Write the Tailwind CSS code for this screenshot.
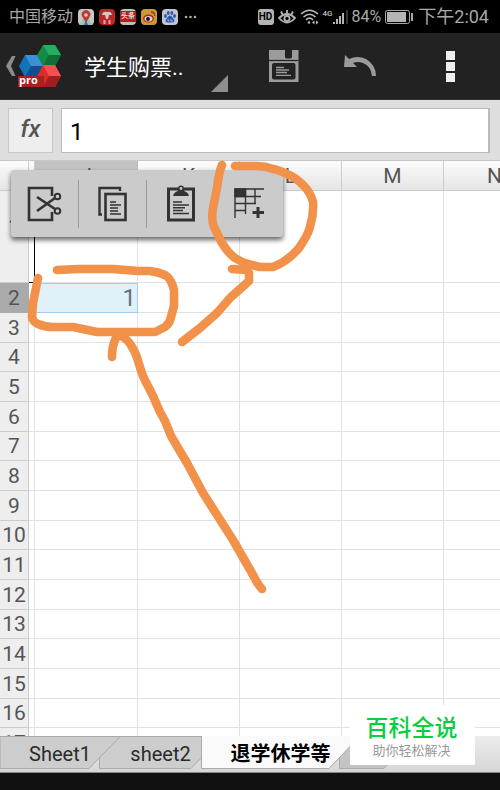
<!DOCTYPE html>
<html lang="zh-CN">
<head>
  <meta charset="UTF-8" />
  <meta name="viewport" content="width=device-width, initial-scale=1.0" />
  <title>学生购票</title>
  <script src="https://cdn.jsdelivr.net/npm/@tailwindcss/browser@4"></script>
  <style>
    body { font-family: Roboto, 'Noto Sans CJK SC', sans-serif; }
  </style>
</head>
<body class="relative flex flex-col h-screen overflow-hidden bg-white">

  <!-- Status bar -->
  <div class="flex items-center justify-between h-[33px] shrink-0 bg-black text-[#a8a8a8] pl-[9px] pr-[11px]">
    <div class="flex items-center gap-[5px]">
      <span class="text-base">中国移动</span>
      <svg class="w-4 h-4" viewBox="0 0 16 16">
        <rect width="16" height="16" rx="4" fill="#c4c8ca"/>
        <path d="M1 16 L6 9 L10 9 L15 16 Z" fill="#9fc3b0"/>
        <path d="M8 14 L4.500 8 A4.300 4.300 0 1 1 11.500 8 Z" fill="#c03a30"/>
        <circle cx="8" cy="6" r="1.800" fill="#e0c8c4"/>
        <path d="M6 16 L8 11 L10 16 Z" fill="#2f6fc0"/>
      </svg>
      <svg class="w-4 h-4" viewBox="0 0 16 16">
        <rect width="16" height="16" rx="4" fill="#bd2626"/>
        <path d="M3 6 Q4 2 8 3 Q12 2 13 6 L10 6 L9 10 L7 10 L6 6 Z" fill="#d8c4c0"/>
        <path d="M4 12 H7 M4 14 H7 M9 12 H12 M9 14 H12 M5.500 11 V15 M10.500 11 V15" stroke="#e0a8a0"/>
      </svg>
      <span class="flex items-center justify-center w-4 h-4 rounded bg-[#c4bcbc]"><span class="w-full bg-[#b81c1c] text-[#ddd] text-[7px] leading-[11px] font-bold text-center whitespace-nowrap">头条</span></span>
      <svg class="w-4 h-4" viewBox="0 0 16 16">
        <rect width="16" height="16" rx="4" fill="#c99b35"/>
        <ellipse cx="7.500" cy="9.500" rx="5.500" ry="4" fill="#b8231c"/>
        <ellipse cx="7.500" cy="9.800" rx="4" ry="2.800" fill="#d8d4d0"/>
        <circle cx="7" cy="10" r="1.900" fill="#111"/>
        <path d="M10 3 Q14 3 13.500 7" fill="none" stroke="#b8231c" stroke-width="1.300"/>
      </svg>
      <svg class="w-4 h-4" viewBox="0 0 16 16">
        <rect width="16" height="16" rx="4" fill="#c2c6cc"/>
        <g fill="#2a57b8">
          <ellipse cx="3.500" cy="7" rx="1.400" ry="2"/><ellipse cx="6.200" cy="4" rx="1.400" ry="2"/>
          <ellipse cx="9.800" cy="4" rx="1.400" ry="2"/><ellipse cx="12.500" cy="7" rx="1.400" ry="2"/>
          <path d="M8 6.500 C10 6.500 10.500 9 12 10.500 C13.500 12.500 11.500 14 8 13.500 C4.500 14 2.500 12.500 4 10.500 C5.500 9 6 6.500 8 6.500 Z"/>
        </g>
        <path d="M6 10 V12 H7.500 M9 10 V12 H11" fill="none" stroke="#c2c6cc" stroke-width=".8"/>
      </svg>
      <svg class="w-4 h-4" viewBox="0 0 16 16" fill="#a8a8a8"><circle cx="3" cy="8" r="1.300"/><circle cx="7.500" cy="8" r="1.300"/><circle cx="12" cy="8" r="1.300"/></svg>
    </div>
    <div class="flex items-center gap-1">
      <span class="w-4 h-4 rounded-[3px] bg-[#b4b4b4] text-black text-[10px] leading-4 font-bold text-center">HD</span>
      <svg class="w-[18px] h-4" viewBox="0 0 18 16" fill="none" stroke="#b4b4b4" stroke-width="1.800">
        <path d="M1 9 Q9 1 17 9 Q9 18 1 9 Z"/><circle cx="9" cy="9.500" r="2.600"/>
        <path d="M9 1 V4 M3 2.500 L4.500 5.500 M15 2.500 L13.500 5.500"/>
      </svg>
      <svg class="w-[19px] h-4" viewBox="0 0 19 16" fill="none" stroke="#b4b4b4" stroke-width="1.600">
        <path d="M1 5 Q9.500 -2.500 18 5 M3.500 8 Q9.500 2.500 15.500 8 M6 10.800 Q9.500 7.500 13 10.800"/>
        <circle cx="9" cy="13.500" r="1.300" fill="#b4b4b4" stroke="none"/>
        <path d="M12 13.500 L14.500 11.500 V15.500 Z M18.500 13.500 L16 11.500 V15.500 Z" fill="#b4b4b4" stroke="none"/>
      </svg>
      <span class="flex items-start">
        <span class="text-[8px] leading-[9px] font-bold">4G</span>
        <svg class="w-[15px] h-4" viewBox="0 0 15 16" fill="#b4b4b4">
          <rect x="0" y="13" width="2" height="2"/><rect x="3" y="10" width="2" height="5"/><rect x="6" y="7" width="2" height="8"/><rect x="9" y="4" width="2" height="11"/><rect x="13" y="1" width="2" height="14" fill="#333"/>
        </svg>
      </span>
      <span class="text-base">84%</span>
      <svg class="w-[28px] h-[14px]" viewBox="0 0 28 14">
        <rect x=".5" y=".5" width="24" height="13" rx="2" fill="none" stroke="#a8a8a8"/>
        <rect x="2" y="2" width="19" height="10" fill="#b4b4b4"/><rect x="26" y="3" width="2" height="8" fill="#a8a8a8"/>
      </svg>
      <span class="text-lg ml-px whitespace-nowrap">下午2:04</span>
    </div>
  </div>

  <!-- App toolbar -->
  <header class="flex items-center h-[67px] shrink-0 bg-[#222] border-b border-[#333]">
    <button class="pl-[5px] shrink-0" aria-label="返回">
      <svg class="w-[58px] h-[44px]" viewBox="0 0 58 44">
        <path d="M7 12 H10.500 L6 22 L10.500 32 H7 L1 22 Z" fill="#8d8d8d"/>
        <path d="M38 1 H50 L56 11 L50 22 H38 L32 11 Z" fill="#178a44"/>
        <path d="M38 1 H50 L56 11 H44 Z" fill="#27ad5e"/>
        <path d="M44 11 H56 L50 22 H38 Z" fill="#0f6d35"/>
        <path d="M20 11 H32 L38 22 L32 33 H20 L14 22 Z" fill="#1373ba"/>
        <path d="M20 11 H32 L38 22 H26 Z" fill="#3b92d2"/>
        <path d="M26 22 H38 L32 33 H20 Z" fill="#134d8a"/>
        <path d="M38 21 H50 L56 32 L50 43 H38 L32 32 Z" fill="#d92d2d"/>
        <path d="M38 21 H50 L56 32 H44 Z" fill="#f05252"/>
        <path d="M44 32 H56 L50 43 H38 Z" fill="#a21d20"/>
        <rect x="13" y="32" width="26" height="11" fill="#a8201f"/>
        <text x="14" y="40" font-family="Open Sans" font-size="11" font-weight="700" fill="#fff">pro</text>
      </svg>
    </button>
    <div class="relative ml-[21px] w-[144px] h-full">
      <select aria-label="文档" class="appearance-none w-full h-full bg-transparent text-white text-[22px] pt-[2px]">
        <option>学生购票..</option>
      </select>
      <svg class="absolute right-0 bottom-[7px] w-[17px] h-[17px] pointer-events-none" viewBox="0 0 17 17"><path d="M17 0 V17 H0 Z" fill="#8f8f8f"/></svg>
    </div>
    <div class="flex-1 flex items-center justify-between pl-[41px] pr-[45px]">
      <button aria-label="保存">
        <svg class="w-[30px] h-8" viewBox="0 0 30 32">
          <path d="M0 0 H16 V7 Q16 8.500 18 8.500 H21 Q23 8.500 23 7 V0 H29.500 V32 H0 Z" fill="#9b9b9b"/>
          <path d="M0 10.500 H29.500" stroke="#222" stroke-width="1.200"/>
          <rect x="3" y="13" width="23.500" height="16.500" rx="2" fill="#222"/>
          <path d="M7 17.500 H15 M7 20 H20 M7 22.500 H18 M7 25.300 H22" stroke="#9b9b9b" stroke-width="1.300"/>
        </svg>
      </button>
      <button class="ml-7" aria-label="撤销">
        <svg class="w-[33px] h-[22px]" viewBox="0 0 33 22">
          <path d="M1 0 L5 4 Q14 0 22 4 Q32 10 32 21 H28 Q27 11 19 8 Q14 6 9 8 L13 12 H0 Z" fill="#9b9b9b"/>
        </svg>
      </button>
      <button class="ml-[52px] flex flex-col gap-[2px]" aria-label="菜单">
        <span class="w-[9px] h-[9px] bg-[#eee]"></span>
        <span class="w-[9px] h-[9px] bg-[#eee]"></span>
        <span class="w-[9px] h-[9px] bg-[#eee]"></span>
      </button>
    </div>
  </header>

  <!-- Formula bar -->
  <div class="flex gap-2 h-[61px] shrink-0 bg-[#dedede] py-2 pl-2 pr-[10px] border-b border-[#c8c8c8]">
    <button class="w-[45px] h-[45px] shrink-0 bg-[#eee] border border-[#c8c8c8] text-[#555] text-2xl font-medium italic pb-1" aria-label="函数">fx</button>
    <input type="text" value="1" aria-label="公式" class="flex-1 min-w-0 h-[45px] bg-white border border-[#bbb] border-r-2 px-2 pt-[2px] text-2xl text-black outline-none" />
  </div>

  <!-- Sheet -->
  <main class="relative flex-1 min-h-0 overflow-hidden">
    <table class="table-fixed w-[546px] border-separate border-spacing-0 text-[21px] leading-6 text-[#555]">
      <colgroup>
        <col class="w-[29px]" /><col class="w-[6px]" />
        <col class="w-[103px]" /><col class="w-[102px]" /><col class="w-[102px]" /><col class="w-[102px]" /><col class="w-[102px]" />
      </colgroup>
      <thead>
        <tr class="h-[30px] bg-linear-to-b from-[#fcfcfc] to-[#e4e4e4]">
          <th class="p-0 border-r border-b border-[#ccc]"></th>
          <th class="p-0 border-r border-b border-[#ccc]"></th>
          <th class="p-0 font-normal border-r border-b border-[#bbb] bg-[#c3c3c3]">J</th>
          <th class="p-0 font-normal border-r border-b border-[#ccc]">K</th>
          <th class="p-0 font-normal border-r border-b border-[#ccc]">L</th>
          <th class="p-0 font-normal border-r border-b border-[#ccc]">M</th>
          <th class="p-0 font-normal border-r border-b border-[#ccc]">N</th>
        </tr>
      </thead>
      <tbody id="rows">
        <tr class="h-[92px]">
          <th class="p-0 pb-5 font-normal bg-[#eee] border-r border-b border-[#ccc]">1</th>
          <td class="p-0 border-r border-b border-black"></td>
          <td class="p-0 border-r border-b border-[#e2e2e2]"></td>
          <td class="p-0 border-r border-b border-[#e2e2e2]"></td>
          <td class="p-0 border-r border-b border-[#e2e2e2]"></td>
          <td class="p-0 border-r border-b border-[#e2e2e2]"></td>
          <td class="p-0 border-r border-b border-[#e2e2e2]"></td>
        </tr>
        <tr class="h-[30px]">
          <th class="p-0 font-normal bg-[#aaa] border-r border-b border-[#aaa]">2</th>
          <td class="p-0 border-r border-b border-[#e2e2e2]"></td>
          <td class="p-0 pr-px text-right text-2xl leading-7 text-[#66747c] bg-[#e1f1fa] border border-[#9fcdf7]">1</td>
          <td class="p-0 border-r border-b border-[#e2e2e2]"></td>
          <td class="p-0 border-r border-b border-[#e2e2e2]"></td>
          <td class="p-0 border-r border-b border-[#e2e2e2]"></td>
          <td class="p-0 border-r border-b border-[#e2e2e2]"></td>
        </tr>
      </tbody>
    </table>

    <!-- Cell popup menu -->
    <div class="absolute left-[11px] top-[9px] flex items-center h-[67px] bg-[#cbcbcb] rounded-[3px] shadow-[0_3px_5px_rgba(0,0,0,0.6)]">
      <button class="flex items-center justify-center w-[68px] h-12 border-r border-[#999]" aria-label="剪切">
        <svg class="w-[35px] h-[36px]" viewBox="0 0 35 36" fill="none" stroke="#333">
          <path d="M25 10 V2 H2 V34 H25 V26" stroke-width="2.600"/>
          <path d="M10 11 L28 23 M10 25 L28 12" stroke-width="2.600"/>
          <circle cx="30.500" cy="10.500" r="2.800" stroke-width="2"/><circle cx="30.500" cy="25" r="2.800" stroke-width="2"/>
        </svg>
      </button>
      <button class="flex items-center justify-center w-[68px] h-12 border-r border-[#999]" aria-label="复制">
        <svg class="w-[29px] h-[36px]" viewBox="0 0 29 36" fill="none" stroke="#333">
          <path d="M4 28.500 H1.500 V2 H22 V5" stroke-width="2.400"/>
          <rect x="7.500" y="8" width="20" height="26" stroke-width="2.600"/>
          <path d="M12 16 H18 M12 19 H23 M12 22 H20 M12 25 H20 M12 28 H23" stroke-width="1.300"/>
        </svg>
      </button>
      <button class="flex items-center justify-center w-[68px] h-12 border-r border-[#999]" aria-label="粘贴">
        <svg class="w-[28px] h-[37px]" viewBox="0 0 28 37" fill="none" stroke="#333">
          <rect x="1.500" y="4" width="25" height="31" stroke-width="3"/>
          <path d="M6 11 Q7 7 11 6 V4 H17 V6 Q21 7 22 11 Z" fill="#333" stroke="none"/>
          <circle cx="14" cy="3.500" r="2.200" stroke-width="1.500" fill="#cbcbcb"/>
          <path d="M6 17 H15 M6 20 H22 M6 22.700 H18 M6 25.400 H16 M6 28.500 H22" stroke-width="1.500"/>
        </svg>
      </button>
      <button class="flex items-center justify-center w-[68px] h-12" aria-label="选择区域">
        <svg class="w-[31px] h-[31px]" viewBox="0 0 31 31" fill="none" stroke="#333" stroke-width="1.400">
          <path d="M1 30 V1 H30 M1 8.500 H27 M1 15.500 H22 M1 22.500 H12 M11.500 1 V26 M21 1 V16"/>
          <rect x="1" y="1" width="10.500" height="7.500" fill="#333"/>
          <path d="M24 19 V30 M18.500 24.500 H30" stroke-width="3"/>
        </svg>
      </button>
    </div>
  </main>

  <!-- Sheet tabs -->
  <nav class="relative flex h-[37px] shrink-0 bg-linear-to-b from-[#ececec] to-[#d6d6d6] border-b border-[#888] text-xl text-[#2b2b2b]">
    <button class="relative z-20 w-[120px] h-[33px] pt-[2px]">
      <svg class="absolute inset-0 w-full h-full" viewBox="0 0 120 33" preserveAspectRatio="none"><path d="M0 .5 H120 L89 32.500 H0 Z" fill="#cdcdcd" stroke="#aaa"/></svg>
      <span class="relative">Sheet1</span>
    </button>
    <button class="relative z-10 -ml-[21px] w-[123px] h-[33px] pt-[2px]">
      <svg class="absolute inset-0 w-full h-full" viewBox="0 0 123 33" preserveAspectRatio="none"><path d="M.5 .5 H123 L92 32.500 H.5 Z" fill="#cdcdcd" stroke="#aaa"/></svg>
      <span class="relative">sheet2</span>
    </button>
    <button class="relative z-30 -ml-[21px] w-[159px] h-[33px] pt-[2px] font-bold text-black">
      <svg class="absolute inset-0 w-full h-full" viewBox="0 0 159 33" preserveAspectRatio="none"><path d="M0 0 H159 L128 32.500 H0 Z" fill="#fafafa"/><path d="M.5 0 V32.500 H128 L159 0" fill="none" stroke="#aaa"/></svg>
      <span class="relative">退学休学等</span>
    </button>
    <button class="relative z-10 -ml-[21px] w-[76px] h-[33px]" aria-label="新建工作表">
      <svg class="absolute inset-0 w-full h-full" viewBox="0 0 76 33" preserveAspectRatio="none"><path d="M.5 .5 H76 L45 32.500 H.5 Z" fill="#c4c4c4" stroke="#aaa"/></svg>
    </button>
  </nav>
  <div class="h-[17px] shrink-0 bg-[#111]"></div>

  <!-- Hand-drawn marks -->
  <svg class="absolute left-0 top-0 z-40 w-[500px] h-[790px] pointer-events-none" viewBox="0 0 500 790" fill="none" stroke="#f29149" stroke-width="8.600" stroke-linecap="round" stroke-linejoin="round">
    <path d="M222 165 Q219 172 217 188 L213 208 Q211 220 214 227 L222 243 Q228 253 235 258 Q241 262 248 264 L260 267 H273 Q287 262 299 248 Q308 235 310 227 Q314 214 313 202 Q311 193 303 185 Q295 177 287 174 Q279 170 273 169 Q265 166 257 166 H235"/>
    <path d="M232 269 L247 270 L249 273 V281 L230 298 L217 313 L200 328 L182 342"/>
    <path d="M38 278 L33 303 L32 317 Q33 322 38 324 Q45 327 53 327 H73 L97 332 H155 L165 327 Q170 323 171 317 L174 306 V290 Q171 278 165 275 Q158 272 150 271 L138 271 L113 269 H78 L57 270"/>
    <path d="M112 357 Q112 347 115 340 L118 334 Q128 339 132 347 Q136 353 139 364 Q143 378 148 386 L153 396 L160 412 L165 421 L171 436 L187 463 L203 493 L233 540 L253 575 Q258 585 262 589"/>
  </svg>

  <!-- Watermark -->
  <div class="absolute right-[25px] bottom-[25px] z-40 flex flex-col items-center justify-center w-[125px] h-[60px] bg-white pr-[2px] pt-1">
    <span class="text-[23px] leading-7 font-medium text-[#07cf3c]">百科全说</span>
    <span class="text-[13px] leading-4 text-[#999]">助你轻松解决</span>
  </div>

  <script>
    const rows = document.getElementById("rows");

    // empty rows below the selection
    for (let n = 3; n <= 17; n++) {
      const tr = document.createElement("tr");
      tr.className = n % 3 === 1 ? "h-[29px]" : "h-[30px]";
      tr.innerHTML = `<th class="p-0 font-normal bg-[#eee] border-r border-b border-[#ccc]">${n}</th>` +
        '<td class="p-0 border-r border-b border-[#e2e2e2]"></td>'.repeat(6);
      rows.appendChild(tr);
    }
  </script>
</body>
</html>
